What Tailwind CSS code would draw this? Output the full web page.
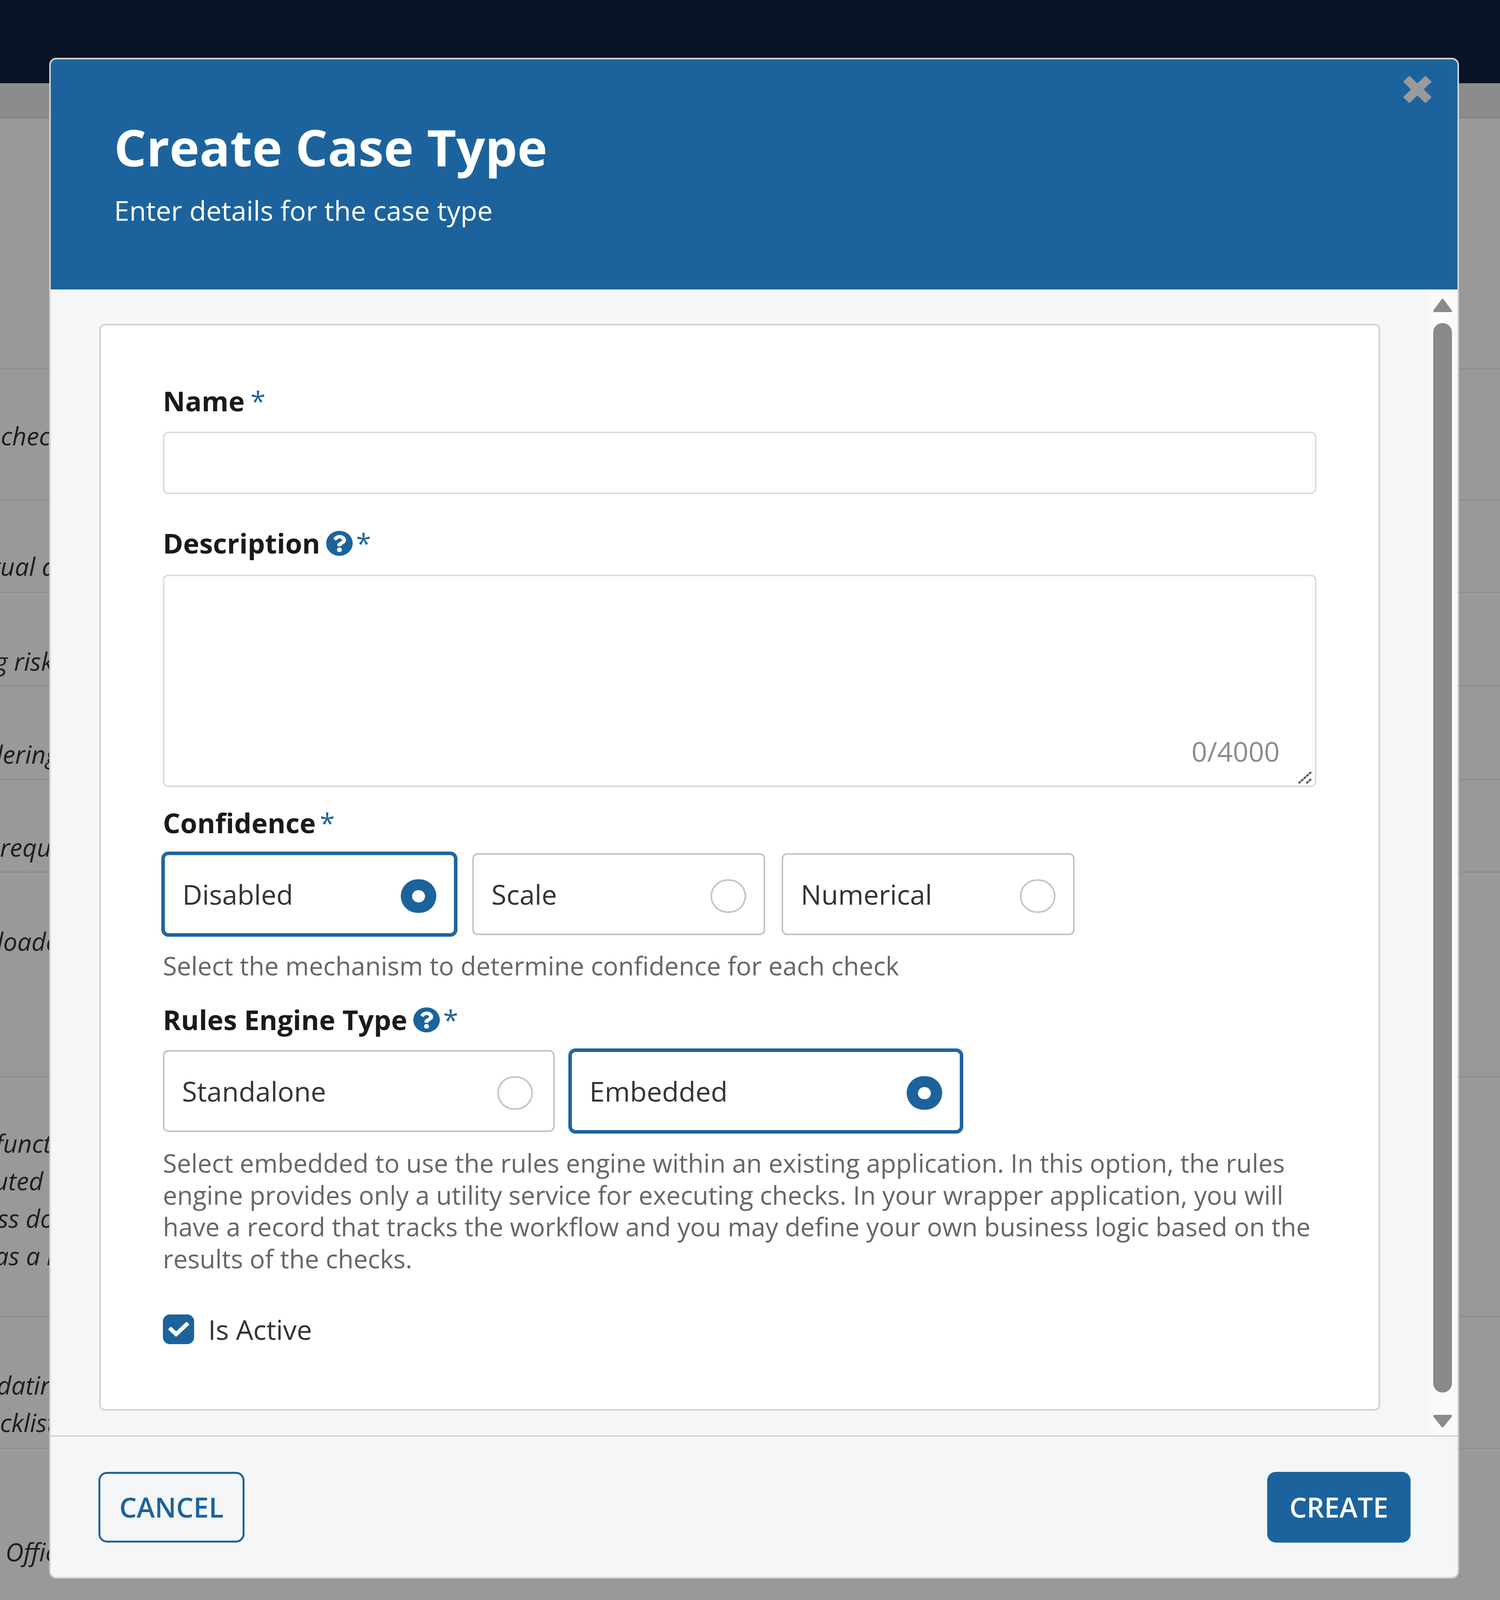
<!DOCTYPE html>
<html lang="en">
<head>
    <meta charset="UTF-8">
    <title>Create Case Type</title>
    <script src="https://cdn.jsdelivr.net/npm/@tailwindcss/browser@4"></script>
</head>
<body class="bg-white">
<div class="relative w-[3840px] h-[4096px] overflow-hidden bg-white font-['Open_Sans',sans-serif]">
    <!-- Page behind the modal -->
    <div class="h-[213px] bg-[#11203f]"></div>
    <div class="h-[90px] bg-[#e9e9e9] border-b-[4px] border-[#dcdcdc]"></div>
    <div class="flex flex-col italic text-[64px] leading-[96px] text-[#333] whitespace-nowrap">
        <div class="h-[643px] border-b-[3px] border-[#ececec]"></div>
        <div class="h-[335px] pt-[122px] pl-[2px] border-b-[3px] border-[#ececec]">checks</div>
        <div class="h-[237px] pt-[121px] pl-[2px] border-b-[3px] border-[#ececec]"><div class="-ml-[22px]">tual a</div></div>
        <div class="h-[239px] pt-[127px] border-b-[3px] border-[#ececec]"><div class="-ml-[14px]">g risk</div></div>
        <div class="h-[240px] pt-[126px] border-b-[3px] border-[#ececec]"><div class="-ml-[30px]">dering</div></div>
        <div class="h-[237px] pt-[124px] border-b-[3px] border-[#ececec]">requ</div>
        <div class="h-[524px] pt-[128px] border-b-[3px] border-[#ececec]"><div class="-ml-[8px]">loade</div></div>
        <div class="h-[614px] pt-[121px] border-b-[3px] border-[#ececec]">
            <div class="-ml-[12px]">funct</div>
            <div class="-ml-[16px]">uted a</div>
            <div class="-ml-[6px]">ss do</div>
            <div class="-ml-[14px]">as a i</div>
        </div>
        <div class="h-[337px] pt-[126px] border-b-[3px] border-[#ececec]">
            <div class="-ml-[8px]">datin</div>
            <div>cklist</div>
        </div>
        <div class="pt-[216px] pl-[14px]">Office</div>
    </div>
    <div class="absolute inset-0 bg-black/40"></div>

    <!-- Modal -->
    <div class="absolute left-[126px] top-[148px] w-[3609px] h-[3893px] flex flex-col bg-[#f5f6f8] border-[4px] border-[#d4d4d4] rounded-[18px] overflow-hidden">
        <div class="relative h-[589px] shrink-0 bg-[#1c639d] pt-[149px] pl-[162px] text-white">
            <h1 class="text-[130px] leading-[150px] font-bold">Create Case Type</h1>
            <p class="mt-[47px] text-[70px] leading-[80px]">Enter details for the case type</p>
            <button type="button" class="absolute left-[3462px] top-[42px]">
                <svg class="block" width="73" height="70" viewBox="0 0 73 73" preserveAspectRatio="none" fill="#9a9a9a" stroke="#9a9a9a" stroke-width="3" stroke-linejoin="round"><polygon points="16,2 36.5,22.5 57,2 71,16 50.5,36.5 71,57 57,71 36.5,50.5 16,71 2,57 22.5,36.5 2,16"/></svg>
            </button>
        </div>

        <div class="flex h-[2933px] shrink-0">
            <div class="flex-1 pl-[124px] pr-[122px] pt-[88px]">
                <form class="h-[2782px] bg-white border-[4px] border-[#d2d2d2] rounded-[14px] pt-[152px] px-[159px] text-[70px] leading-[82px]">
                    <label class="flex items-start font-bold text-[#1a1a1a]">Name<span class="ml-[15px] font-normal text-[#1c639d]">*</span></label>
                    <input type="text" class="block mt-[38px] w-full h-[160px] bg-white border-[4px] border-[#dcdcdc] rounded-[14px]">

                    <label class="flex items-start mt-[84px] font-bold text-[#1a1a1a]">Description
                        <svg class="ml-[14px] mt-[9px]" width="70" height="66" viewBox="0 0 512 512" preserveAspectRatio="none" fill="#1c639d"><path d="M504 256c0 136.997-111.043 248-248 248S8 392.997 8 256C8 119.083 119.043 8 256 8s248 111.083 248 248zM262.655 90c-54.497 0-89.255 22.957-116.549 63.758-3.536 5.286-2.353 12.415 2.715 16.258l34.699 26.31c5.205 3.947 12.621 3.008 16.665-2.122 17.864-22.658 30.113-35.797 57.303-35.797 20.429 0 45.698 13.148 45.698 32.958 0 14.976-12.363 22.667-32.534 33.976C247.128 238.528 216 254.941 216 296v4c0 6.627 5.373 12 12 12h56c6.627 0 12-5.373 12-12v-1.333c0-28.462 83.186-29.647 83.186-106.667 0-58.002-60.165-102-116.531-102zM256 338c-25.365 0-46 20.635-46 46 0 25.364 20.635 46 46 46s46-20.636 46-46c0-25.365-20.635-46-46-46z"/></svg>
                        <span class="ml-[8px] font-normal text-[#1c639d]">*</span>
                    </label>
                    <div class="relative mt-[40px] h-[544px]">
                        <textarea class="block w-full h-full resize-none bg-white border-[4px] border-[#dcdcdc] rounded-[14px]"></textarea>
                        <span class="absolute right-[94px] bottom-[51px] text-[#8c8c8c]">0/4000</span>
                        <svg class="absolute right-[9px] bottom-[9px]" width="37" height="34" viewBox="0 0 37 34" fill="none" stroke="#555" stroke-width="5" stroke-linecap="round" stroke-dasharray="3 6"><path d="M2 32 L35 2 M22 32 L35 20"/></svg>
                    </div>

                    <label class="flex items-start mt-[50px] font-bold text-[#1a1a1a]">Confidence<span class="ml-[10px] font-normal text-[#1c639d]">*</span></label>
                    <div class="flex gap-[42px] mt-[37px]">
                        <div class="flex items-center justify-between w-[750px] h-[210px] px-[45px] border-[5px] border-[#1c639d] ring-[4px] ring-[#1c639d] rounded-[14px] text-[#333]">
                            <span>Disabled</span>
                            <span class="flex items-center justify-center mt-[10px] w-[91px] h-[86px] rounded-full bg-[#1c639d]"><span class="w-[33px] h-[31px] rounded-full bg-white"></span></span>
                        </div>
                        <div class="flex items-center justify-between w-[750px] h-[210px] px-[45px] bg-white border-[4px] border-[#c4c4c4] rounded-[14px] text-[#333]">
                            <span>Scale</span>
                            <span class="mt-[10px] w-[91px] h-[86px] rounded-full border-[4px] border-[#c4c4c4]"></span>
                        </div>
                        <div class="flex items-center justify-between w-[750px] h-[210px] px-[45px] bg-white border-[4px] border-[#c4c4c4] rounded-[14px] text-[#333]">
                            <span>Numerical</span>
                            <span class="mt-[10px] w-[91px] h-[86px] rounded-full border-[4px] border-[#c4c4c4]"></span>
                        </div>
                    </div>
                    <p class="mt-[37px] text-[65.2px] text-[#666]">Select the mechanism to determine confidence for each check</p>

                    <label class="flex items-start mt-[56px] font-bold text-[#1a1a1a]">Rules Engine Type
                        <svg class="ml-[14px] mt-[9px]" width="70" height="66" viewBox="0 0 512 512" preserveAspectRatio="none" fill="#1c639d"><path d="M504 256c0 136.997-111.043 248-248 248S8 392.997 8 256C8 119.083 119.043 8 256 8s248 111.083 248 248zM262.655 90c-54.497 0-89.255 22.957-116.549 63.758-3.536 5.286-2.353 12.415 2.715 16.258l34.699 26.31c5.205 3.947 12.621 3.008 16.665-2.122 17.864-22.658 30.113-35.797 57.303-35.797 20.429 0 45.698 13.148 45.698 32.958 0 14.976-12.363 22.667-32.534 33.976C247.128 238.528 216 254.941 216 296v4c0 6.627 5.373 12 12 12h56c6.627 0 12-5.373 12-12v-1.333c0-28.462 83.186-29.647 83.186-106.667 0-58.002-60.165-102-116.531-102zM256 338c-25.365 0-46 20.635-46 46 0 25.364 20.635 46 46 46s46-20.636 46-46c0-25.365-20.635-46-46-46z"/></svg>
                        <span class="ml-[8px] font-normal text-[#1c639d]">*</span>
                    </label>
                    <div class="flex gap-[39px] mt-[37px]">
                        <div class="flex items-center justify-between w-[1003px] h-[210px] pl-[45px] pr-[52px] bg-white border-[4px] border-[#c4c4c4] rounded-[14px] text-[#333]">
                            <span>Standalone</span>
                            <span class="mt-[10px] w-[91px] h-[86px] rounded-full border-[4px] border-[#c4c4c4]"></span>
                        </div>
                        <div class="flex items-center justify-between w-[1003px] h-[210px] px-[45px] border-[5px] border-[#1c639d] ring-[4px] ring-[#1c639d] rounded-[14px] text-[#333]">
                            <span>Embedded</span>
                            <span class="flex items-center justify-center mt-[10px] w-[91px] h-[86px] rounded-full bg-[#1c639d]"><span class="w-[33px] h-[31px] rounded-full bg-white"></span></span>
                        </div>
                    </div>
                    <p class="mt-[38px] text-[65.2px] leading-[81.5px] text-[#666]">Select embedded to use the rules engine within an existing application. In this option, the rules engine provides only a utility service for executing checks. In your wrapper application, you will have a record that tracks the workflow and you may define your own business logic based on the results of the checks.</p>

                    <label class="flex items-center gap-[36px] mt-[100px] text-[#333]">
                        <span class="flex items-center justify-center w-[80px] h-[76px] rounded-[18px] bg-[#1c639d]">
                            <svg width="53" height="50" viewBox="0 0 512 512" preserveAspectRatio="none" fill="#fff"><path d="M173.898 439.404l-166.4-166.4c-9.997-9.997-9.997-26.206 0-36.204l36.203-36.204c9.997-9.998 26.207-9.998 36.204 0L192 312.69 432.095 72.596c9.997-9.997 26.207-9.997 36.204 0l36.203 36.204c9.997 9.997 9.997 26.206 0 36.204l-294.4 294.401c-9.998 9.997-26.207 9.997-36.204-.001z"/></svg>
                        </span>
                        Is Active
                    </label>
                </form>
            </div>
            <!-- Scrollbar -->
            <div class="flex flex-col items-center w-[76px] shrink-0 bg-[#fafafa] pt-[24px]">
                <svg width="48" height="34" viewBox="0 0 48 34" fill="#8a8a8a" stroke="#8a8a8a" stroke-width="6" stroke-linejoin="round"><polygon points="24,3 45,31 3,31"/></svg>
                <div class="mt-[28px] w-[48px] h-[2738px] rounded-full bg-[#8a8a8a]"></div>
                <svg class="mt-[57px]" width="48" height="32" viewBox="0 0 48 32" fill="#8a8a8a" stroke="#8a8a8a" stroke-width="6" stroke-linejoin="round"><polygon points="3,3 45,3 24,29"/></svg>
            </div>
        </div>

        <div class="flex-1 flex items-start justify-between border-t-[4px] border-[#d6d6d6] pt-[90px] pl-[122px] pr-[120px] text-[70px] font-semibold">
            <button type="button" class="w-[374px] h-[181px] border-[5px] border-[#1c639d] rounded-[22px] text-[#1c639d]">CANCEL</button>
            <button type="button" class="w-[367px] h-[181px] bg-[#1c639d] rounded-[22px] text-white">CREATE</button>
        </div>
    </div>
</div>
</body>
</html>
